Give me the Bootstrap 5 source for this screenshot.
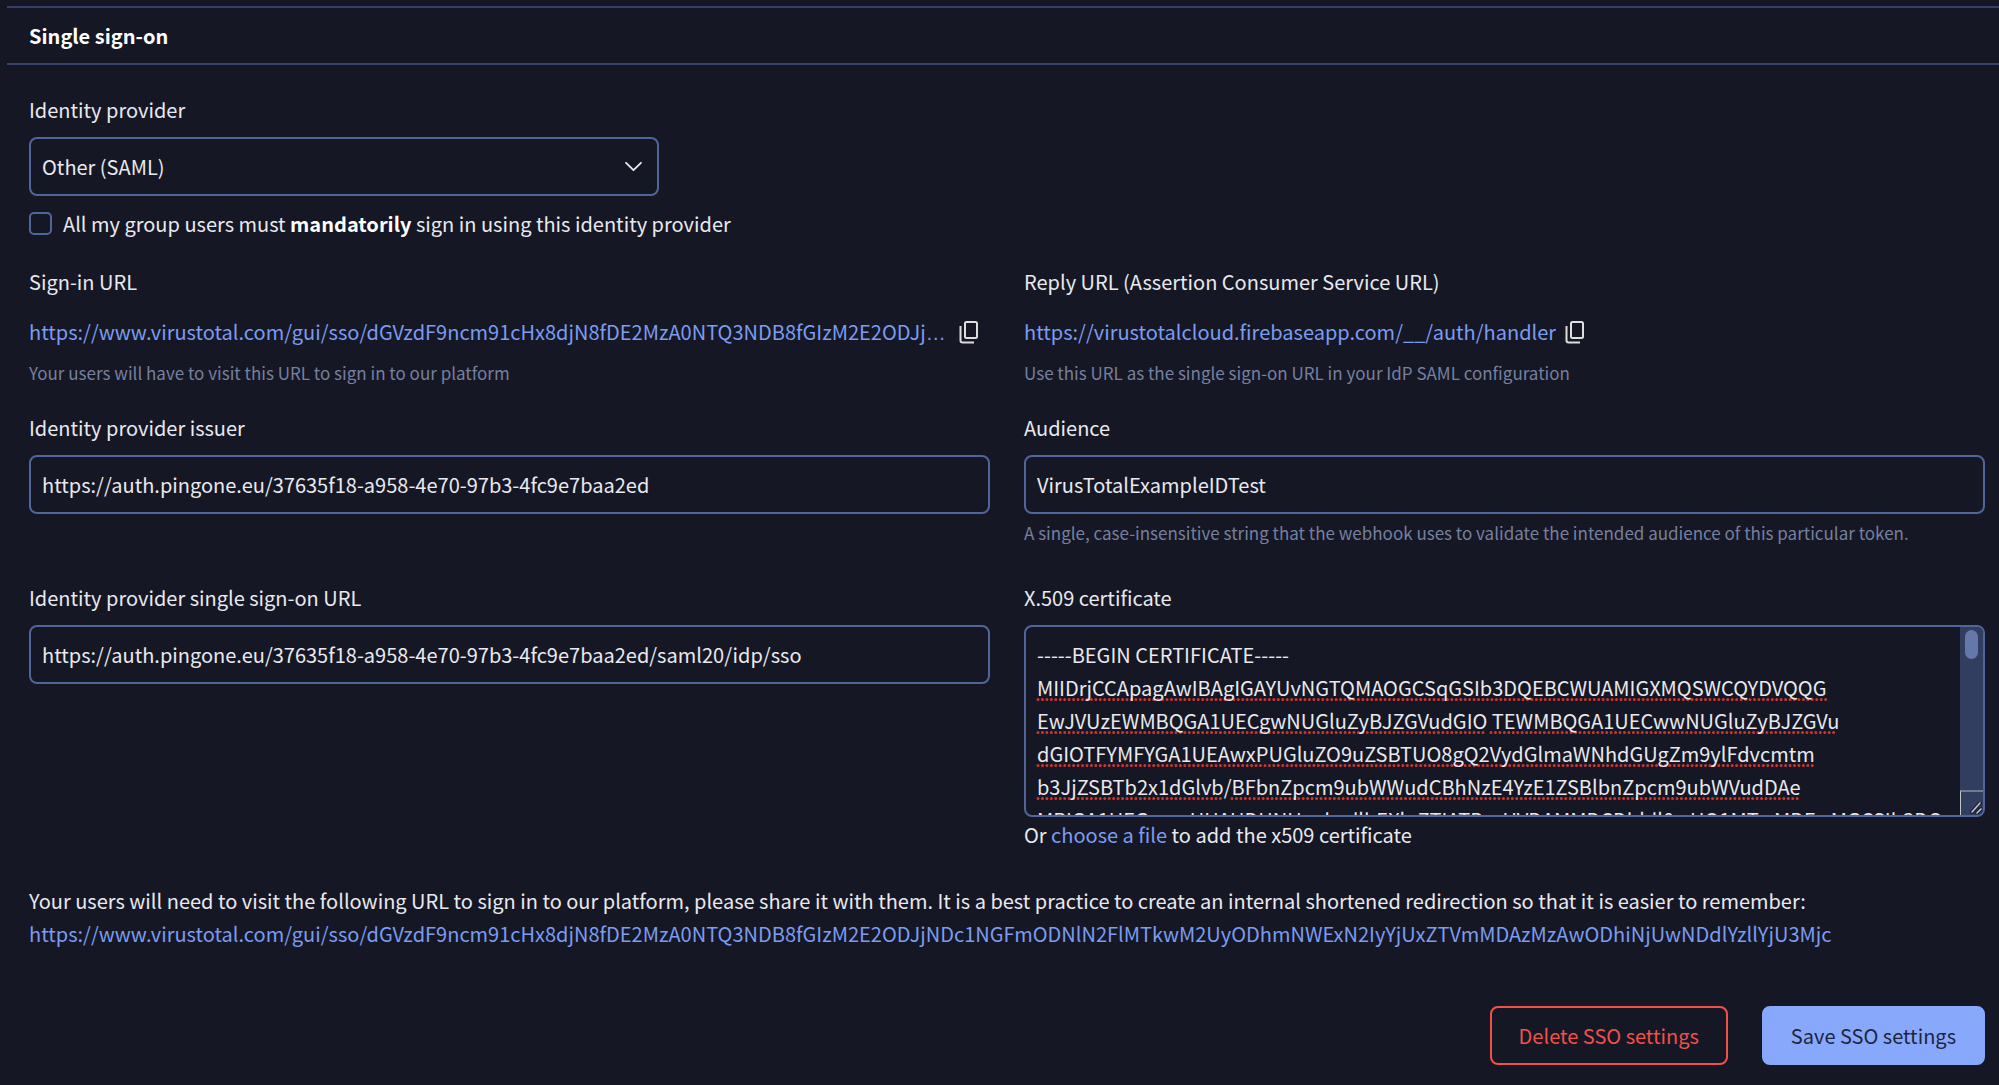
<!DOCTYPE html>
<html lang="en">
<head>
<meta charset="utf-8">
<meta name="viewport" content="width=device-width, initial-scale=1">
<title>Single sign-on</title>
<link href="https://cdn.jsdelivr.net/npm/bootstrap@5.3.0/dist/css/bootstrap.min.css" rel="stylesheet">
<style>
:root { --ink: #e9e9ee; --edge: #50659b; --accent: #7b9cf0; --panel: #151724; }
body { font-family: "Noto Sans CJK SC", "Noto Sans", sans-serif; font-size: 20px; line-height: 33px; color: var(--ink); background: var(--panel); }
.sso-panel { padding: 6px 0 18px 7px; }
.sso-heading { border: solid #35416a; border-width: 2px 0; height: 59px; padding: 0 22px; }
.sso-heading h2 { font-size: 20px; line-height: 33px; font-weight: 700; margin: 0; color: #fff; }
.sso-form { padding: 28px 14px 0 22px; }
.sso-form a { color: var(--accent); text-decoration: none; }
.sso-form b { color: #fff; }
.sso-label { display: block; margin-bottom: 11px; }
.sso-form .form-control, .sso-form .form-select {
  background-color: var(--panel); color: var(--ink); border: 2px solid var(--edge); border-radius: 8px;
  font-size: 20px; line-height: 33px; height: 59px; padding: 11px; }
.sso-form .form-select {
  background-image: url("data:image/svg+xml,%3Csvg xmlns='http://www.w3.org/2000/svg' viewBox='0 0 16 16'%3E%3Cpath fill='none' stroke='%23e9e9ee' stroke-width='1.7' stroke-linecap='round' stroke-linejoin='round' d='M1 4.5l7 7 7-7'/%3E%3C/svg%3E");
  background-size: 17px 17px; background-position: right 15px center; }
.sso-provider { max-width: 630px; }
.sso-check { gap: 11px; margin-top: 11px; }
.sso-form .form-check-input { width: 23px; height: 23px; margin: 0; border: 2px solid var(--edge); border-radius: 5px; background-color: transparent; }
.sso-grid { --bs-gutter-x: 34px; margin-top: 25px; }
.sso-grid + .sso-last { margin-top: 35px; }
.url-title { margin-bottom: 17px; }
.url-line { gap: 9px; }
.url-dots { font-family: "Liberation Sans", sans-serif; line-height: 1; padding-right: 4px; }
.sso-help { font-size: 17px; line-height: 26px; color: #75809f; }
.url-line + .sso-help { margin-top: 12px; }
.form-control + .sso-help { margin-top: 6px; }
.copy-btn { border: 0; background: none; padding: 2px 0 0; color: #dedede; line-height: 0; }
.cert-box { position: relative; margin-bottom: 1px; }
.sso-form textarea.form-control {
  height: 192px; padding: 11px 34px 0 11px; resize: none; white-space: pre; overflow: hidden; display: block;
  background-repeat: no-repeat; background-position: 0 0;
  background-image: url("data:image/svg+xml,%3Csvg xmlns='http://www.w3.org/2000/svg' width='900' height='188'%3E%3Cpath fill='none' stroke='%23d0342f' stroke-width='3' stroke-linecap='round' stroke-dasharray='0 4.45' d='M12 72.5H800M12 105.5H458M465 105.5H812M12 138.5H788M12 171.5H198M206 171.5H774'/%3E%3C/svg%3E"); }
.cert-track { position: absolute; top: 2px; right: 2px; bottom: 2px; width: 23px; background: #313e60; border-radius: 0 6px 6px 0; }
.cert-thumb { width: 13px; height: 29px; margin: 3px auto 0; border-radius: 7px; background: #6678a9; }
.cert-grip { position: absolute; right: 0; bottom: 0; width: 23px; height: 25px; border-left: 1px solid #c3c5cb; border-top: 2px solid #737a8e; }
.cert-grip svg { position: absolute; right: 1px; bottom: 1px; }
.share-note { margin-top: 33px; }
.share-note a { display: block; overflow-wrap: anywhere; }
.sso-actions { gap: 34px; margin-top: 56px; }
.btn-sso { font-size: 20px; line-height: 33px; padding: 11px 27px; border-width: 2px; border-radius: 8px; }
.btn-remove { color: #f2504b; border-color: #f2504b; }
.btn-store { color: #1d2440; background: #88a9fb; border-color: #88a9fb; }
</style>
<script src="https://cdn.jsdelivr.net/npm/bootstrap@5.3.0/dist/js/bootstrap.bundle.min.js"></script>
</head>
<body>
<main class="sso-panel">
  <header class="sso-heading d-flex align-items-center"><h2>Single sign-on</h2></header>
  <form class="sso-form">
    <div class="sso-provider">
      <label class="sso-label" for="provider">Identity provider</label>
      <select class="form-select" id="provider"><option>Other (SAML)</option></select>
    </div>
    <div class="sso-check d-flex align-items-center">
      <input class="form-check-input" type="checkbox" id="mandatory">
      <label for="mandatory">All my group users must <b>mandatorily</b> sign in using this identity provider</label>
    </div>

    <div class="row sso-grid">
      <div class="col-6">
        <div class="url-title">Sign-in URL</div>
        <div class="url-line d-flex align-items-center">
          <a class="text-truncate" href="#">https://www.virustotal.com/gui/sso/dGVzdF9ncm91cHx8djN8fDE2MzA0NTQ3NDB8fGIzM2E2ODJj<span class="url-dots">…</span></a>
          <button class="copy-btn" type="button" aria-label="Copy sign-in URL">
            <svg width="20" height="23" viewBox="0 0 20 23" fill="none" stroke="currentColor" stroke-width="2"><rect x="6" y="1" width="12" height="16" rx="1.5"/><path d="M1.5 5v14.5a2 2 0 0 0 2 2H15"/></svg>
          </button>
        </div>
        <div class="sso-help">Your users will have to visit this URL to sign in to our platform</div>
      </div>
      <div class="col-6">
        <div class="url-title">Reply URL (Assertion Consumer Service URL)</div>
        <div class="url-line d-flex align-items-center">
          <a class="text-truncate" href="#">https://virustotalcloud.firebaseapp.com/__/auth/handler</a>
          <button class="copy-btn" type="button" aria-label="Copy reply URL">
            <svg width="20" height="23" viewBox="0 0 20 23" fill="none" stroke="currentColor" stroke-width="2"><rect x="6" y="1" width="12" height="16" rx="1.5"/><path d="M1.5 5v14.5a2 2 0 0 0 2 2H15"/></svg>
          </button>
        </div>
        <div class="sso-help">Use this URL as the single sign-on URL in your IdP SAML configuration</div>
      </div>
    </div>

    <div class="row sso-grid">
      <div class="col-6">
        <label class="sso-label" for="issuer">Identity provider issuer</label>
        <input class="form-control" type="text" id="issuer" value="https://auth.pingone.eu/37635f18-a958-4e70-97b3-4fc9e7baa2ed">
      </div>
      <div class="col-6">
        <label class="sso-label" for="audience">Audience</label>
        <input class="form-control" type="text" id="audience" value="VirusTotalExampleIDTest">
        <div class="sso-help">A single, case-insensitive string that the webhook uses to validate the intended audience of this particular token.</div>
      </div>
    </div>

    <div class="row sso-grid sso-last">
      <div class="col-6">
        <label class="sso-label" for="ssourl">Identity provider single sign-on URL</label>
        <input class="form-control" type="text" id="ssourl" value="https://auth.pingone.eu/37635f18-a958-4e70-97b3-4fc9e7baa2ed/saml20/idp/sso">
      </div>
      <div class="col-6">
        <label class="sso-label" for="cert">X.509 certificate</label>
        <div class="cert-box">
          <textarea class="form-control" id="cert" spellcheck="false">-----BEGIN CERTIFICATE-----
MIIDrjCCApagAwIBAgIGAYUvNGTQMAOGCSqGSIb3DQEBCWUAMIGXMQSWCQYDVQQG
EwJVUzEWMBQGA1UECgwNUGluZyBJZGVudGIO TEWMBQGA1UECwwNUGluZyBJZGVu
dGIOTFYMFYGA1UEAwxPUGluZO9uZSBTUO8gQ2VydGlmaWNhdGUgZm9ylFdvcmtm
b3JjZSBTb2x1dGlvb/BFbnZpcm9ubWWudCBhNzE4YzE1ZSBlbnZpcm9ubWVudDAe
MRIGA1UEGmuvUUAUDUNUwdwdlbEXluZTIATDmUVDAMMDCDbldl0wUQ1MTwMDFwMGCSIb3DQ</textarea>
          <div class="cert-track" aria-hidden="true">
            <div class="cert-thumb"></div>
            <div class="cert-grip"><svg width="12" height="12" viewBox="0 0 12 12" stroke-linecap="round"><path d="M2 10L10 1M7 11l4-4" stroke="#1b1f30" stroke-width="4"/><path d="M2 10L10 1M7 11l4-4" stroke="#c3c5cb" stroke-width="1.6"/></svg></div>
          </div>
        </div>
        <div>Or <a href="#">choose a file</a> to add the x509 certificate</div>
      </div>
    </div>

    <div class="share-note">
      Your users will need to visit the following URL to sign in to our platform, please share it with them. It is a best practice to create an internal shortened redirection so that it is easier to remember:
      <a href="#">https://www.virustotal.com/gui/sso/dGVzdF9ncm91cHx8djN8fDE2MzA0NTQ3NDB8fGIzM2E2ODJjNDc1NGFmODNlN2FlMTkwM2UyODhmNWExN2IyYjUxZTVmMDAzMzAwODhiNjUwNDdlYzllYjU3Mjc</a>
    </div>
    <div class="sso-actions d-flex justify-content-end">
      <button class="btn btn-sso btn-remove" type="button">Delete SSO settings</button>
      <button class="btn btn-sso btn-store" type="submit">Save SSO settings</button>
    </div>
  </form>
</main>
</body>
</html>
